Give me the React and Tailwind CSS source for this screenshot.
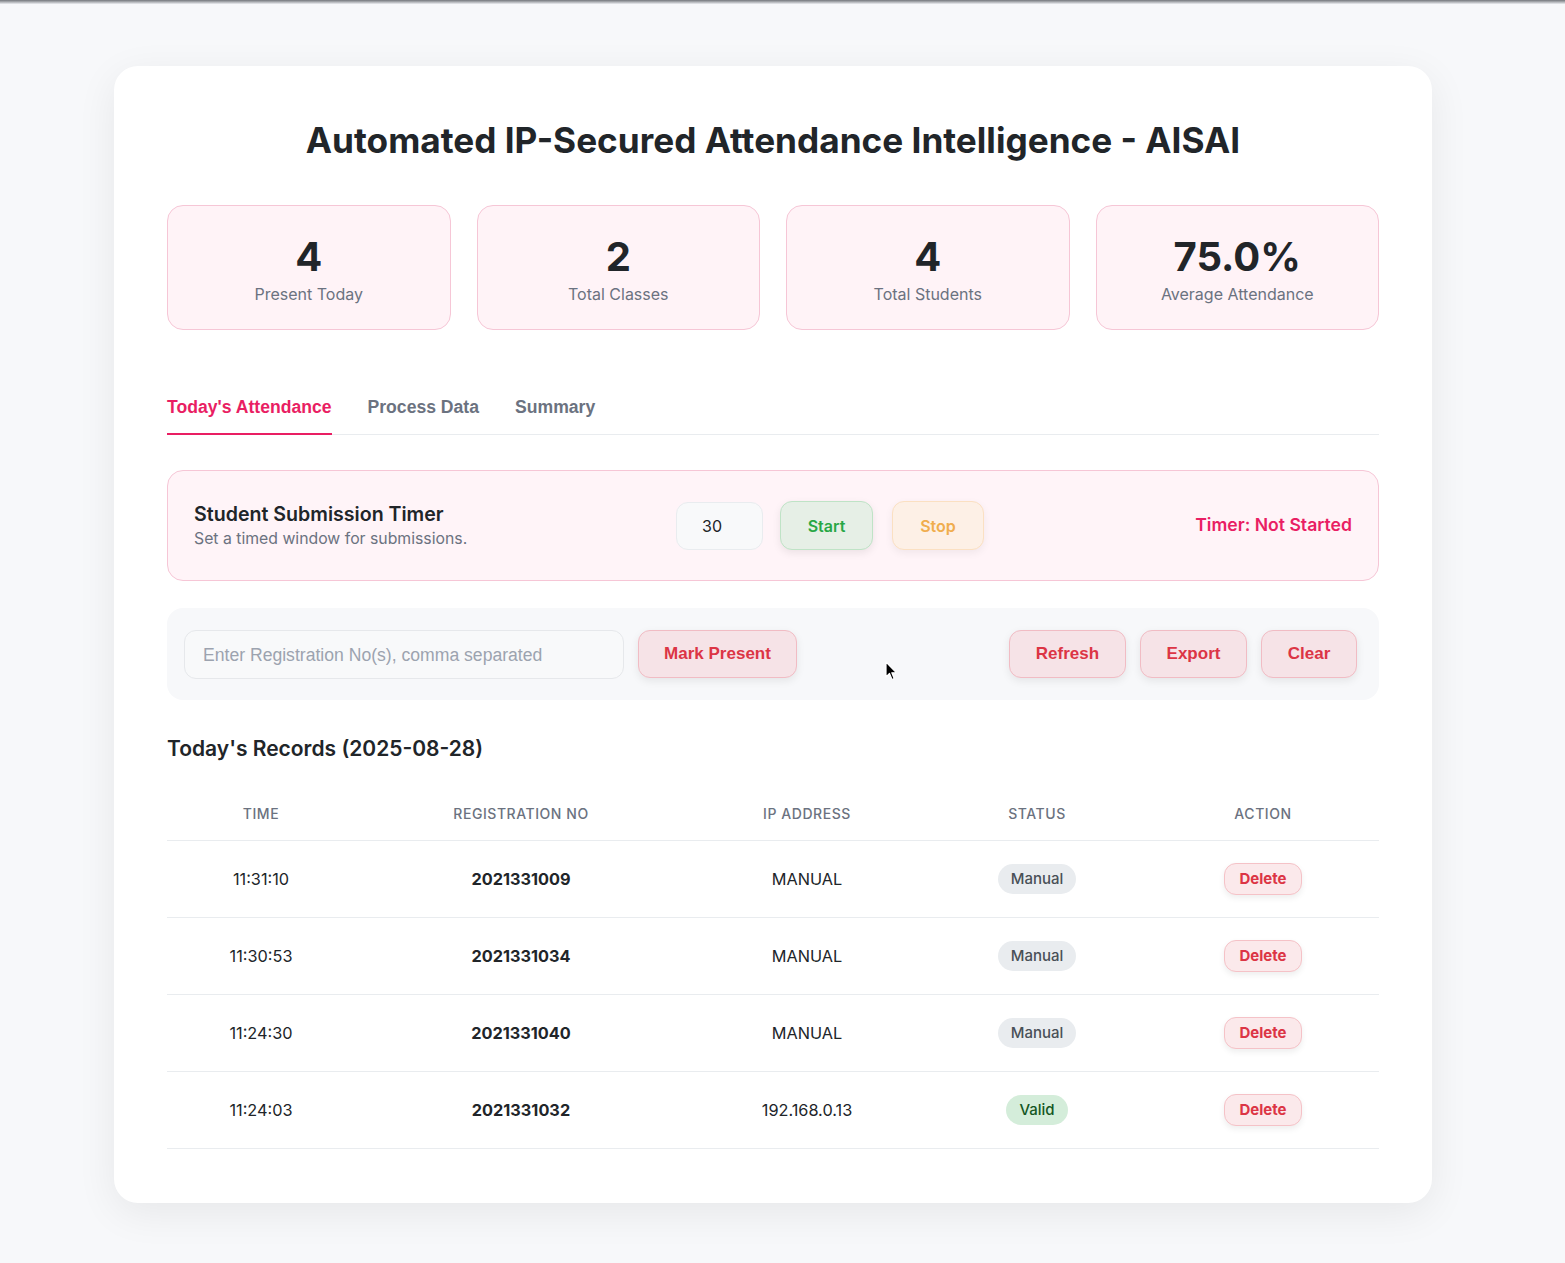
import React from 'react';

const inter = { fontFamily: 'Inter, "Noto Sans", sans-serif' };

const stats = [
  { value: '4', label: 'Present Today' },
  { value: '2', label: 'Total Classes' },
  { value: '4', label: 'Total Students' },
  { value: '75.0%', label: 'Average Attendance' },
];

const records = [
  { time: '11:31:10', reg: '2021331009', ip: 'MANUAL', status: 'Manual' },
  { time: '11:30:53', reg: '2021331034', ip: 'MANUAL', status: 'Manual' },
  { time: '11:24:30', reg: '2021331040', ip: 'MANUAL', status: 'Manual' },
  { time: '11:24:03', reg: '2021331032', ip: '192.168.0.13', status: 'Valid' },
];

function StatCard({ value, label }) {
  return (
    <div className="h-[125px] rounded-2xl border border-[#f6c6d6] bg-[#fff3f7] flex flex-col items-center pt-[30px]">
      <div className="text-[40px] leading-[42px] font-bold text-[#212529]">{value}</div>
      <div className="mt-[4px] text-[16px] leading-[24px] text-[#6b7280]">{label}</div>
    </div>
  );
}

function RedButton({ children, className = '' }) {
  return (
    <button
      className={`h-[48px] rounded-xl border border-[#f1bcc4] bg-[#f6e3e7] text-[17px] font-bold text-[#dc3545] shadow-[0_3px_8px_rgba(0,0,0,0.08)] font-['Liberation_Sans',Arial,sans-serif] ${className}`}
    >
      {children}
    </button>
  );
}

function Cursor() {
  return (
    <svg className="absolute left-[885px] top-[661px]" width="14" height="21" viewBox="0 0 14 21">
      <path d="M1 1 L1 16 L4.5 12.5 L7 18.5 L9.2 17.6 L6.8 11.8 L11.5 11.8 Z" fill="#000" stroke="#fff" strokeWidth="1.2" strokeLinejoin="round" />
    </svg>
  );
}

export default function App() {
  return (
    <div className="relative min-h-[1263px] bg-[#f7f8fa] pt-[66px] pb-[61px]" style={inter}>
      <div className="absolute inset-x-0 top-0 h-[4px] bg-gradient-to-b from-[#74777c] to-[#eceef1]" />
      <div className="ml-[114px] w-[1318px] rounded-[24px] bg-white shadow-[0_10px_40px_rgba(0,0,0,0.07)] px-[53px] pt-[52px] pb-[54px]">
        <h1 className="text-center text-[35.2px] leading-[44px] font-bold text-[#212529]">
          Automated IP-Secured Attendance Intelligence - AISAI
        </h1>

        <div className="mt-[43px] grid grid-cols-4 gap-[26px]">
          {stats.map((s) => (
            <StatCard key={s.label} {...s} />
          ))}
        </div>

        <div className="mt-[63px] flex gap-[36px] border-b border-[#e9ecef] font-['Liberation_Sans',Arial,sans-serif] text-[17.6px] leading-[28px] font-bold">
          <div className="pb-[12px] border-b-[2px] border-[#e91e63] text-[#e91e63] -mb-px">Today's Attendance</div>
          <div className="pb-[12px] text-[#6b7280]">Process Data</div>
          <div className="pb-[12px] text-[#6b7280]">Summary</div>
        </div>

        <div className="mt-[35px] h-[111px] rounded-2xl border border-[#f6c6d6] bg-[#fff4f8] pl-[26px] pr-[26px] flex items-center">
          <div className="w-[482px]">
            <div className="text-[19.6px] leading-[26px] font-semibold text-[#212529]">Student Submission Timer</div>
            <div className="text-[15.8px] leading-[24px] text-[#6b7280]">Set a timed window for submissions.</div>
          </div>
          <div className="flex items-center gap-[17px]">
            <div className="w-[87px] h-[48px] rounded-xl border border-[#e9ecef] bg-[#f8f9fa] flex items-center pl-[25px] text-[16px] text-[#212529]">
              30
            </div>
            <button className="w-[93px] h-[49px] rounded-xl border border-[#bfe3c6] bg-[#e6efe6] text-[16px] font-semibold text-[#28a745] shadow-[0_3px_8px_rgba(0,0,0,0.08)]">
              Start
            </button>
            <button className="ml-[2px] w-[92px] h-[49px] rounded-xl border border-[#fbe0c2] bg-[#fdf0e6] text-[16px] font-semibold text-[#f0ad4e] shadow-[0_3px_8px_rgba(0,0,0,0.06)]">
              Stop
            </button>
          </div>
          <div className="ml-auto text-[17.6px] font-semibold text-[#e91e63]">Timer: Not Started</div>
        </div>

        <div className="mt-[27px] h-[92px] rounded-2xl bg-[#f7f8fa] px-[17px] flex items-center">
          <div className="w-[440px] h-[49px] rounded-xl border border-[#e6e8eb] bg-[#f8f9fa] flex items-center pl-[18px] pt-[2px] text-[17.6px] text-[#9ca3af] font-['Liberation_Sans',Arial,sans-serif]">
            Enter Registration No(s), comma separated
          </div>
          <RedButton className="ml-[14px] w-[159px]">Mark Present</RedButton>
          <div className="ml-auto flex gap-[14px] pr-[5px]">
            <RedButton className="w-[117px]">Refresh</RedButton>
            <RedButton className="w-[107px]">Export</RedButton>
            <RedButton className="w-[96px]">Clear</RedButton>
          </div>
        </div>

        <h2 className="mt-[35px] text-[21px] leading-[28px] font-semibold text-[#212529]">Today's Records (2025-08-28)</h2>

        <table className="mt-[31px] w-full table-fixed border-collapse">
          <colgroup>
            <col className="w-[188px]" />
            <col className="w-[332px]" />
            <col className="w-[240px]" />
            <col className="w-[220px]" />
            <col className="w-[232px]" />
          </colgroup>
          <thead>
            <tr className="border-b border-[#e9ecef]">
              {['Time', 'Registration No', 'IP Address', 'Status', 'Action'].map((h) => (
                <th key={h} className="pt-[10px] pb-[16px] text-center text-[14px] leading-[20px] font-medium uppercase tracking-[0.04em] text-[#6b7280]">
                  {h}
                </th>
              ))}
            </tr>
          </thead>
          <tbody>
            {records.map((r) => (
              <tr key={r.reg} className="h-[77px] border-b border-[#e9ecef] text-[16.3px] text-[#212529]">
                <td className="text-center">{r.time}</td>
                <td className="text-center font-bold">{r.reg}</td>
                <td className="text-center">{r.ip}</td>
                <td className="text-center">
                  {r.status === 'Valid' ? (
                    <span className="inline-block rounded-full bg-[#d4edda] px-[13px] py-[4px] text-[15px] font-medium text-[#155724]">Valid</span>
                  ) : (
                    <span className="inline-block rounded-full bg-[#e9ecef] px-[13px] py-[4px] text-[15px] font-medium text-[#495057]">Manual</span>
                  )}
                </td>
                <td className="text-center">
                  <button className="h-[32px] w-[78px] rounded-xl border border-[#f5c2c7] bg-[#fbe9eb] text-[15px] font-bold text-[#dc3545] shadow-[0_3px_6px_rgba(0,0,0,0.07)]">
                    Delete
                  </button>
                </td>
              </tr>
            ))}
          </tbody>
        </table>
      </div>
      <Cursor />
    </div>
  );
}
